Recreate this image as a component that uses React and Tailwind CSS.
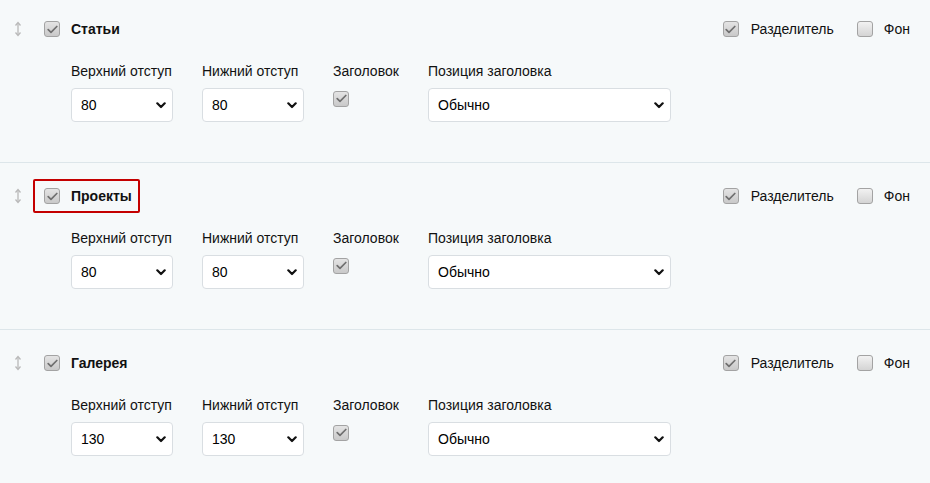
import React from 'react';

const Check = ({ checked }) => (
    <span className={`inline-flex items-center justify-center w-4 h-4 rounded-[3px] border border-[#a3a3a3] shrink-0 ${checked ? 'bg-gradient-to-b from-[#e4e4e4] to-[#c9c9c9]' : 'bg-gradient-to-b from-[#f2f2f2] to-[#d4d4d4]'}`}>
        {checked && (
            <svg width="11" height="9" viewBox="0 0 11 9" fill="none">
                <path d="M1.2 4.6 L4 7.3 L9.8 1.5" stroke="#6f6f6f" strokeWidth="1.7" strokeLinecap="round" strokeLinejoin="round" />
            </svg>
        )}
    </span>
);

const DragIcon = () => (
    <svg width="8" height="16" viewBox="0 0 8 16" fill="none" className="shrink-0">
        <path d="M4 2 V14" stroke="#b9b9b9" strokeWidth="1.3" />
        <path d="M1.5 4.5 L4 1.5 L6.5 4.5" stroke="#b9b9b9" strokeWidth="1.3" fill="none" />
        <path d="M1.5 11.5 L4 14.5 L6.5 11.5" stroke="#b9b9b9" strokeWidth="1.3" fill="none" />
    </svg>
);

const Select = ({ value, width }) => (
    <div className={`relative h-[34px] ${width}`}>
        <div className="h-full w-full bg-white border border-[#d9dee2] rounded-[4px] flex items-center pl-[9px] text-[14px] text-black">
            {value}
        </div>
        <svg className="absolute right-[7px] top-[14px]" width="10" height="7" viewBox="0 0 10 7" fill="none">
            <path d="M1.3 1.3 L5 5 L8.7 1.3" stroke="#111" strokeWidth="2.2" strokeLinecap="round" strokeLinejoin="round" />
        </svg>
    </div>
);

const sections = [
    { title: 'Статьи', top: '80', bottom: '80', highlight: false },
    { title: 'Проекты', top: '80', bottom: '80', highlight: true },
    { title: 'Галерея', top: '130', bottom: '130', highlight: false },
];

export default function App() {
    return (
        <div className="w-[930px] h-[483px] overflow-hidden bg-[#f6f9fa] text-[14px] text-[#111]" style={{ fontFamily: '"Liberation Sans", Arial, sans-serif' }}>
            {sections.map((s, i) => (
                <div key={s.title} className={`${i === 0 ? 'pt-[12px]' : 'pt-[16px]'} pb-[40px] border-b border-[#dde6ea]`}>
                    <div className="flex items-center h-[34px] pr-[20px]">
                        <div className="w-[33px] flex justify-center pl-[3px]">
                            <DragIcon />
                        </div>
                        <div className={`flex items-center gap-[11px] h-[34px] pl-[9px] pr-[6px] border-2 rounded-[2px] ${s.highlight ? 'border-[#c40000]' : 'border-transparent'}`}>
                            <Check checked />
                            <span className="font-bold">{s.title}</span>
                        </div>
                        <div className="ml-auto flex items-center">
                            <Check checked />
                            <span className="ml-[12px]">Разделитель</span>
                            <span className="ml-[23px] flex items-center"><Check /></span>
                            <span className="ml-[11px]">Фон</span>
                        </div>
                    </div>
                    <div className="flex gap-[29px] pl-[71px] mt-[15px]">
                        <div className="w-[102px]">
                            <div className="leading-[20px] whitespace-nowrap">Верхний отступ</div>
                            <div className="mt-[7px]"><Select value={s.top} width="w-[102px]" /></div>
                        </div>
                        <div className="w-[102px]">
                            <div className="leading-[20px] whitespace-nowrap">Нижний отступ</div>
                            <div className="mt-[7px]"><Select value={s.bottom} width="w-[102px]" /></div>
                        </div>
                        <div className="w-[66px]">
                            <div className="leading-[20px] whitespace-nowrap">Заголовок</div>
                            <div className="mt-[7px]"><Check checked /></div>
                        </div>
                        <div className="w-[243px]">
                            <div className="leading-[20px] whitespace-nowrap">Позиция заголовка</div>
                            <div className="mt-[7px]"><Select value="Обычно" width="w-[243px]" /></div>
                        </div>
                    </div>
                </div>
            ))}
        </div>
    );
}
